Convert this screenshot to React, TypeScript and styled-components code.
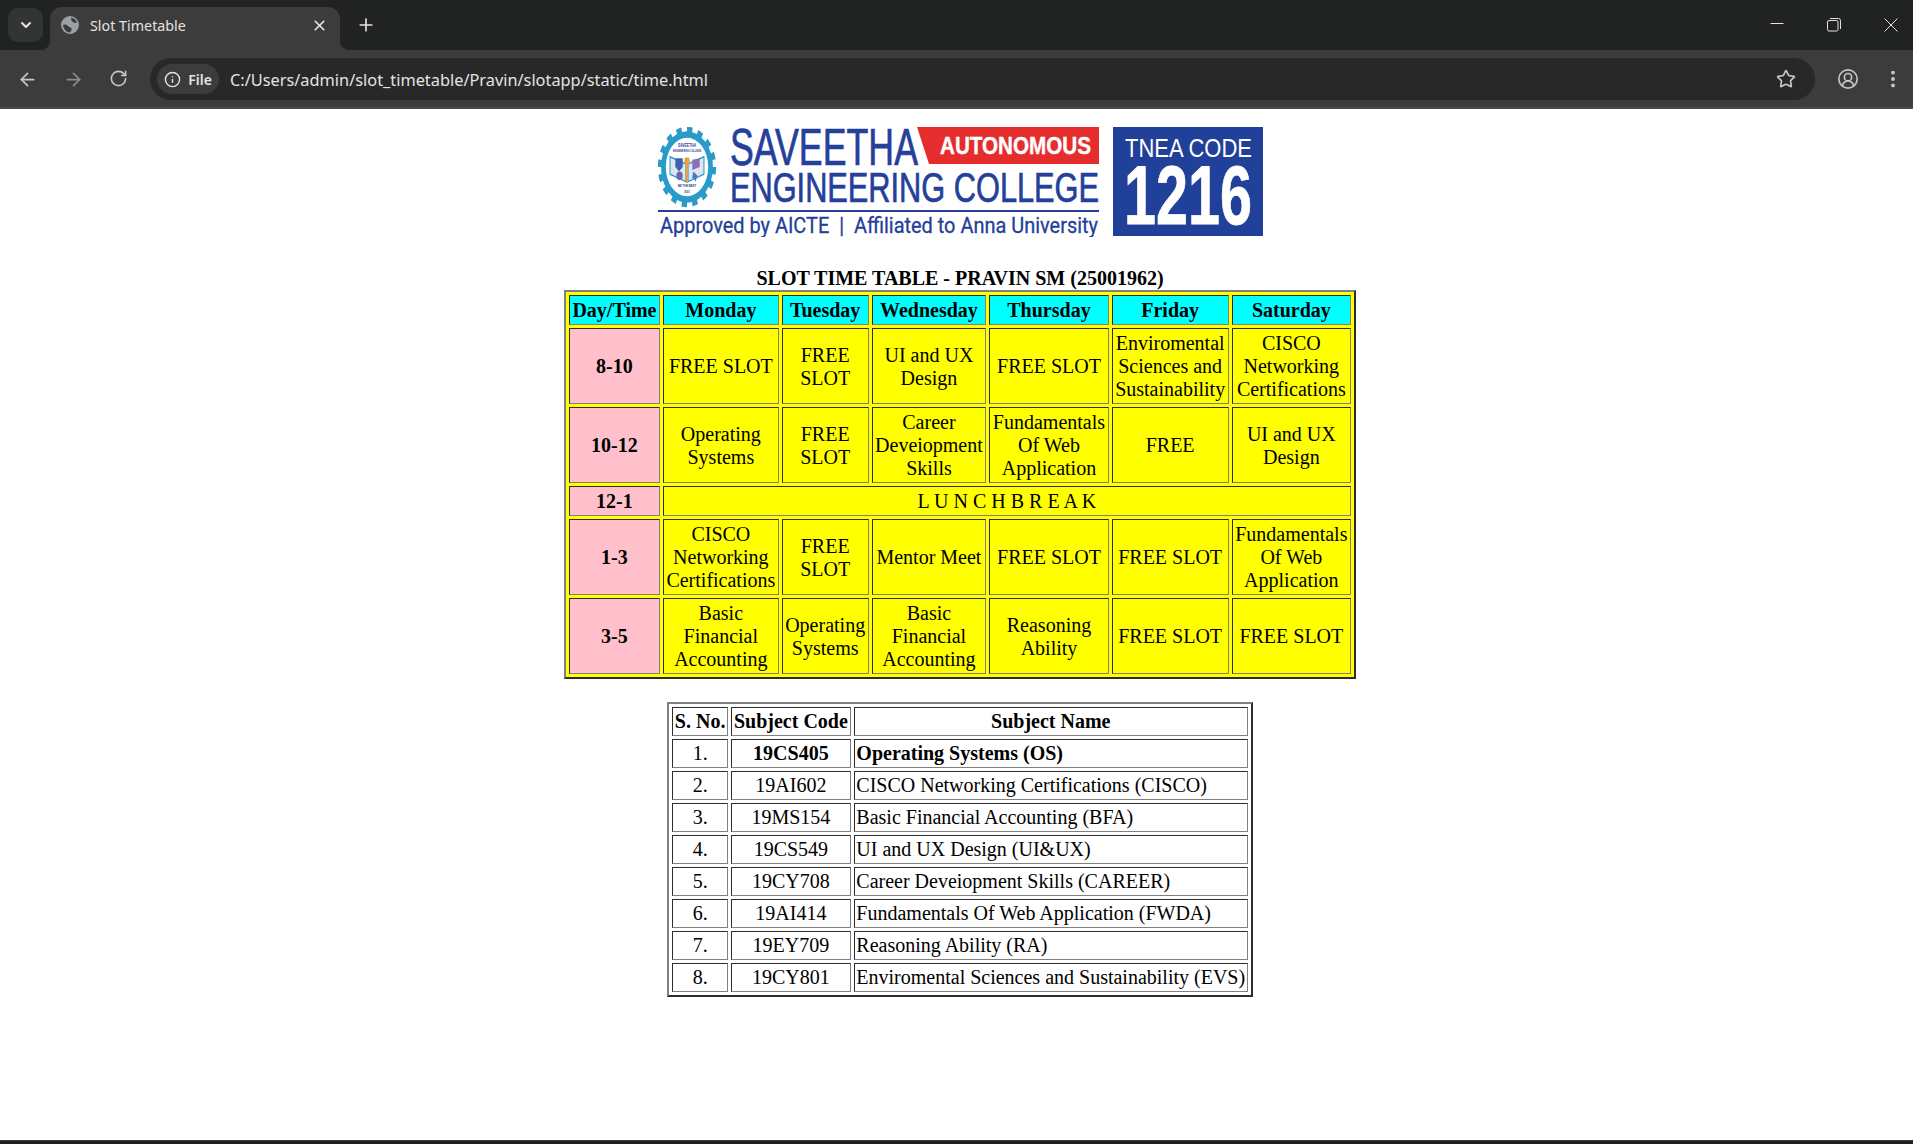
import styled, { createGlobalStyle } from 'styled-components'
import {
  ArrowLeft,
  ArrowRight,
  ChevronDown,
  CircleUserRound,
  EllipsisVertical,
  Info,
  Plus,
  RotateCw,
  Star,
  X,
} from 'lucide-react'

const GlobalStyle = createGlobalStyle`
  html, body {
    margin: 0;
    padding: 0;
    background: #fff;
  }
`

const Window = styled.div`
  width: 1913px;
  height: 1144px;
  display: flex;
  flex-direction: column;
  overflow: hidden;
`

const TabStrip = styled.div`
  height: 50px;
  flex: none;
  background: #202322;
  display: flex;
  align-items: flex-end;
  padding-left: 8px;
  color: #e3e3e3;
  font-family: 'Noto Sans', sans-serif;
`

const TabSearch = styled.div`
  width: 35px;
  height: 34px;
  margin-bottom: 8px;
  border-radius: 10px;
  background: #333534;
  display: flex;
  align-items: center;
  justify-content: center;
`

const Tab = styled.div`
  position: relative;
  width: 290px;
  height: 43px;
  margin-left: 7px;
  background: #3c3c3c;
  border-radius: 12px 12px 0 0;
  display: flex;
  align-items: center;
  padding: 0 12px 7px 11px;
  box-sizing: border-box;
  font-size: 14.3px;

  &::before,
  &::after {
    content: '';
    position: absolute;
    bottom: 0;
    width: 10px;
    height: 10px;
  }
  &::before {
    left: -10px;
    background: radial-gradient(circle at 0 0, transparent 10px, #3c3c3c 10.5px);
  }
  &::after {
    right: -10px;
    background: radial-gradient(circle at 100% 0, transparent 10px, #3c3c3c 10.5px);
  }
`

const TabTitle = styled.span`
  margin-left: 11px;
  flex: 1;
`

const NewTab = styled.div`
  margin: 0 0 15px 16px;
  display: flex;
`

const WindowButtons = styled.div`
  margin-left: auto;
  height: 100%;
  box-sizing: border-box;
  display: flex;
  align-items: flex-start;
  gap: 43px;
  padding: 18px 15px 0 0;
`

const Toolbar = styled.div`
  height: 59px;
  flex: none;
  box-sizing: border-box;
  padding-top: 1px;
  background: #3c3c3c;
  border-bottom: 2px solid #4a4a4a;
  display: flex;
  align-items: center;
  color: #c7c7c7;
  font-family: 'Noto Sans', sans-serif;
`

const NavButton = styled.div<{ $faded?: boolean }>`
  width: 45.5px;
  display: flex;
  justify-content: center;
  color: ${(p) => (p.$faded ? '#8b8b8b' : '#c7c7c7')};
`

const NavGroup = styled.div`
  display: flex;
  padding-left: 5px;
  margin-right: 8.5px;
`

const Omnibox = styled.div`
  width: 1665px;
  height: 42px;
  flex: none;
  box-sizing: border-box;
  background: #282828;
  border-radius: 21px;
  display: flex;
  align-items: center;
  padding: 0 19px 0 7px;
`

const FileChip = styled.div`
  width: 62px;
  height: 30px;
  box-sizing: border-box;
  border-radius: 15px;
  background: #3c3c3c;
  display: flex;
  align-items: center;
  justify-content: center;
  gap: 7px;
  color: #e3e3e3;
  font-size: 14px;
  font-weight: 600;
`

const Url = styled.span`
  margin: 2px 0 0 11px;
  flex: 1;
  color: #e3e3e3;
  font-size: 16.33px;
`

const ToolIcons = styled.div`
  display: flex;
  align-items: center;
  gap: 23px;
  padding-left: 22px;
`

const Page = styled.main`
  flex: 1;
  background: #fff;
  color: #000;
  font-family: 'Liberation Serif', 'Times New Roman', serif;
  font-size: 20px;
  display: flex;
  flex-direction: column;
  align-items: center;
  padding: 18px 0 0 7px;
`

const Logo = styled.svg`
  display: block;
  width: 605px;
  height: 110px;
  flex: none;
`

const Title = styled.div`
  margin-top: 30px;
  line-height: 23px;
  font-weight: bold;
`

const Grid = styled.table`
  border: 2px outset grey;
  border-collapse: separate;
  border-spacing: 3px;
  line-height: 23px;
`

const SlotGrid = styled(Grid)`
  width: 792px;
  background: #ffff00;
`

const SubjectGrid = styled(Grid)`
  margin-top: 23px;

  td,
  th {
    padding: 2px 1.75px;
  }
`

const Cell = styled.td<{ $bg?: string; $bold?: boolean; $left?: boolean }>`
  border: 1px inset grey;
  padding: 2px;
  text-align: ${(p) => (p.$left ? 'left' : 'center')};
  font-weight: ${(p) => (p.$bold ? 'bold' : 'normal')};
  background: ${(p) => p.$bg ?? 'transparent'};
`

const SlotCell = styled(Cell)`
  padding: 3px 2px 2px;
`

const BottomEdge = styled.div`
  height: 4px;
  flex: none;
  background: #202020;
  border-top: 1px solid #3a3a3a;
  box-sizing: border-box;
`

const days = ['Monday', 'Tuesday', 'Wednesday', 'Thursday', 'Friday', 'Saturday']
const slotColumns = [90, 97, 73, 95, 97, 97, 99]

const slots: { time: string; cells?: string[] }[] = [
  {
    time: '8-10',
    cells: [
      'FREE SLOT',
      'FREE SLOT',
      'UI and UX Design',
      'FREE SLOT',
      'Enviromental Sciences and Sustainability',
      'CISCO Networking Certifications',
    ],
  },
  {
    time: '10-12',
    cells: [
      'Operating Systems',
      'FREE SLOT',
      'Career Deveiopment Skills',
      'Fundamentals Of Web Application',
      'FREE',
      'UI and UX Design',
    ],
  },
  { time: '12-1' },
  {
    time: '1-3',
    cells: [
      'CISCO Networking Certifications',
      'FREE SLOT',
      'Mentor Meet',
      'FREE SLOT',
      'FREE SLOT',
      'Fundamentals Of Web Application',
    ],
  },
  {
    time: '3-5',
    cells: [
      'Basic Financial Accounting',
      'Operating Systems',
      'Basic Financial Accounting',
      'Reasoning Ability',
      'FREE SLOT',
      'FREE SLOT',
    ],
  },
]

const subjects = [
  ['19CS405', 'Operating Systems (OS)'],
  ['19AI602', 'CISCO Networking Certifications (CISCO)'],
  ['19MS154', 'Basic Financial Accounting (BFA)'],
  ['19CS549', 'UI and UX Design (UI&UX)'],
  ['19CY708', 'Career Deveiopment Skills (CAREER)'],
  ['19AI414', 'Fundamentals Of Web Application (FWDA)'],
  ['19EY709', 'Reasoning Ability (RA)'],
  ['19CY801', 'Enviromental Sciences and Sustainability (EVS)'],
]

function CollegeLogo() {
  const blue = '#24409a'
  return (
    <Logo viewBox="0 0 605 110">
      {/* gear badge, stretched taller than wide like the source image */}
      <g transform="translate(29 40) scale(1.06 1.46)">
        <circle r="25.5" fill="none" stroke="#2a9bc9" strokeWidth="4" strokeDasharray="5 5" />
        <circle r="24.5" fill="#2a9bc9" />
        <circle r="20" fill="#fff" />
        <path d="M-16-7l15 5v12l-15-5zM16-7L1-2v12l15-5z" fill="#dfe6f3" stroke="#2a9bc9" strokeWidth="1" />
        <path d="M-11-6h7v6l-3.5 3-3.5-3z" fill="#3c62b0" />
        <path d="M5-5l7-1v6l-7 2z" fill="#8a6fb5" />
        <path d="M-1-3h2v14h-2z" fill="#e9a23b" />
        <circle cy="-4" r="2.6" fill="#e9a23b" />
        <circle cx="-7" cy="6" r="3" fill="#7b5ea8" />
        <path d="M6 3l4 3-2 4-3-3z" fill="#4f78bd" />
        <g fill="#24409a" fontFamily="Liberation Sans" fontWeight="bold" textAnchor="middle">
          <text y="-14" fontSize="3.2">SAVEETHA</text>
          <text y="-10.5" fontSize="2.2">ENGINEERING COLLEGE</text>
          <text y="14" fontSize="2.6">BE THE BEST</text>
          <text y="17.5" fontSize="2.4">2001</text>
        </g>
      </g>
      <g stroke={blue} strokeWidth="0.7" fill={blue} fontFamily="Liberation Sans">
        <text x="72" y="38" fontSize="51" textLength="188" lengthAdjust="spacingAndGlyphs">SAVEETHA</text>
        <text x="72" y="75" fontSize="42" textLength="369" lengthAdjust="spacingAndGlyphs">ENGINEERING COLLEGE</text>
      </g>
      <polygon points="259,0 441,0 441,37 271,37" fill="#e52d2d" />
      <text x="282" y="27" fill="#fff" stroke="#fff" strokeWidth="0.4" fontFamily="Liberation Sans" fontWeight="bold" fontSize="24" textLength="151" lengthAdjust="spacingAndGlyphs">AUTONOMOUS</text>
      <rect x="0" y="83" width="441" height="2" fill={blue} />
      <text x="2" y="106" fill={blue} stroke={blue} strokeWidth="0.3" fontFamily="Roboto" fontSize="22" textLength="438" lengthAdjust="spacingAndGlyphs">
        Approved by AICTE{'\u00a0\u00a0|\u00a0\u00a0'}Affiliated to Anna University
      </text>
      <rect x="455" y="0" width="150" height="109" fill="#21409a" />
      <text x="467" y="30" fill="#fff" fontFamily="Liberation Sans" fontSize="25" textLength="127" lengthAdjust="spacingAndGlyphs">TNEA CODE</text>
      <text x="466" y="97" fill="#fff" stroke="#fff" strokeWidth="0.8" fontFamily="Liberation Sans" fontWeight="bold" fontSize="84" textLength="128" lengthAdjust="spacingAndGlyphs">1216</text>
    </Logo>
  )
}

export default function App() {
  return (
    <Window>
      <GlobalStyle />
      <TabStrip>
        <TabSearch>
          <ChevronDown size={16} strokeWidth={3} />
        </TabSearch>
        <Tab>
          <svg width="18" height="18" viewBox="0 0 18 18">
            <circle cx="9" cy="9" r="9" fill="#9aa0a6" />
            <path d="M10 1.5c3 .5 5 2.5 6 5-2 .5-3 .5-4-.5-1.5-1-2-2.5-2-4.500zM2 9c2-1 4-.5 5 1 1 1.2 3 1 3.5 2.5.5 1.5-.5 3-2 4C5 16 2.5 13 2 9z" fill="#3c3c3c" />
          </svg>
          <TabTitle>Slot Timetable</TabTitle>
          <X size={17} strokeWidth={2.4} />
        </Tab>
        <NewTab>
          <Plus size={20} strokeWidth={2} />
        </NewTab>
        <WindowButtons>
          <svg width="14" height="14" viewBox="0 0 14 14" stroke="#e3e3e3" fill="none">
            <path d="M.5 5.5h13" />
          </svg>
          <svg width="14" height="14" viewBox="0 0 14 14" stroke="#e3e3e3" fill="none">
            <rect x=".5" y="2.5" width="10.5" height="10.5" rx="1.5" />
            <path d="M3 .5h8.5a2 2 0 0 1 2 2V11" />
          </svg>
          <svg width="14" height="14" viewBox="0 0 14 14" stroke="#e3e3e3" fill="none">
            <path d="M.5.5l13 13M13.5.5l-13 13" />
          </svg>
        </WindowButtons>
      </TabStrip>
      <Toolbar>
        <NavGroup>
          <NavButton>
            <ArrowLeft size={21} />
          </NavButton>
          <NavButton $faded>
            <ArrowRight size={21} />
          </NavButton>
          <NavButton>
            <RotateCw size={19} />
          </NavButton>
        </NavGroup>
        <Omnibox>
          <FileChip>
            <Info size={17} />
            File
          </FileChip>
          <Url>C:/Users/admin/slot_timetable/Pravin/slotapp/static/time.html</Url>
          <Star size={20} strokeWidth={2} />
        </Omnibox>
        <ToolIcons>
          <CircleUserRound size={22} strokeWidth={1.8} />
          <EllipsisVertical size={22} strokeWidth={2.2} />
        </ToolIcons>
      </Toolbar>
      <Page>
        <CollegeLogo />
        <Title>SLOT TIME TABLE - PRAVIN SM (25001962)</Title>
        <SlotGrid>
          <colgroup>
            {slotColumns.map((w, i) => (
              <col key={i} width={w} />
            ))}
          </colgroup>
          <tbody>
            <tr>
              <SlotCell as="th" $bg="#00ffff" $bold>
                Day/Time
              </SlotCell>
              {days.map((d) => (
                <SlotCell as="th" key={d} $bg="#00ffff" $bold>
                  {d}
                </SlotCell>
              ))}
            </tr>
            {slots.map((row) => (
              <tr key={row.time}>
                <SlotCell $bg="#ffc0cb" $bold>
                  {row.time}
                </SlotCell>
                {row.cells ? (
                  row.cells.map((c, i) => <SlotCell key={i}>{c}</SlotCell>)
                ) : (
                  <SlotCell colSpan={6}>L U N C H B R E A K</SlotCell>
                )}
              </tr>
            ))}
          </tbody>
        </SlotGrid>
        <SubjectGrid>
          <tbody>
            <tr>
              <Cell as="th" $bold>
                S. No.
              </Cell>
              <Cell as="th" $bold>
                Subject Code
              </Cell>
              <Cell as="th" $bold>
                Subject Name
              </Cell>
            </tr>
            {subjects.map(([code, name], i) => (
              <tr key={code}>
                <Cell>{i + 1}.</Cell>
                <Cell $bold={i === 0}>{code}</Cell>
                <Cell $left $bold={i === 0}>
                  {name}
                </Cell>
              </tr>
            ))}
          </tbody>
        </SubjectGrid>
      </Page>
      <BottomEdge />
    </Window>
  )
}
